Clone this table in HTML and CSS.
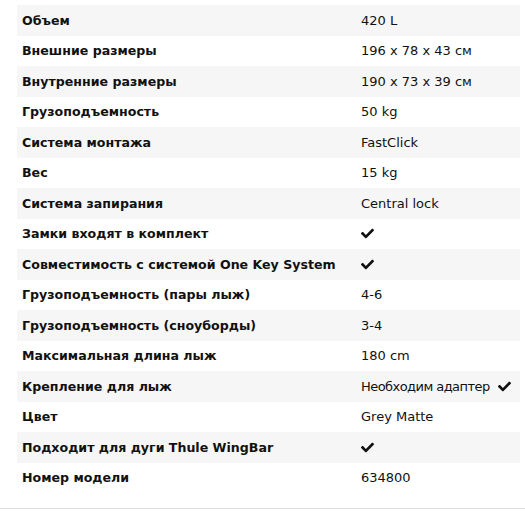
FILE: index.html
```html
<!DOCTYPE html>
<html lang="ru">
<head>
<meta charset="utf-8">
<link rel="stylesheet" href="styles.css">
</head>
<body>
<div class="specs">
  <div class="table">
    <div class="row"><div class="label">Объем</div><div class="value">420 L</div></div>
    <div class="row"><div class="label">Внешние размеры</div><div class="value">196 x 78 x 43 см</div></div>
    <div class="row"><div class="label">Внутренние размеры</div><div class="value">190 x 73 x 39 см</div></div>
    <div class="row"><div class="label">Грузоподъемность</div><div class="value">50 kg</div></div>
    <div class="row"><div class="label">Система монтажа</div><div class="value">FastClick</div></div>
    <div class="row"><div class="label">Вес</div><div class="value">15 kg</div></div>
    <div class="row"><div class="label">Система запирания</div><div class="value">Central lock</div></div>
    <div class="row"><div class="label">Замки входят в комплект</div><div class="value"><svg class="check" viewBox="0 0 512 512"><path d="M173.898 439.404l-166.4-166.4c-9.997-9.997-9.997-26.206 0-36.204l36.203-36.204c9.997-9.998 26.207-9.998 36.204 0L192 312.69 432.095 72.596c9.997-9.997 26.207-9.997 36.204 0l36.203 36.204c9.997 9.997 9.997 26.206 0 36.204l-294.4 294.401c-9.998 9.997-26.207 9.997-36.204-.001z"/></svg></div></div>
    <div class="row"><div class="label">Совместимость с системой One Key System</div><div class="value"><svg class="check" viewBox="0 0 512 512"><path d="M173.898 439.404l-166.4-166.4c-9.997-9.997-9.997-26.206 0-36.204l36.203-36.204c9.997-9.998 26.207-9.998 36.204 0L192 312.69 432.095 72.596c9.997-9.997 26.207-9.997 36.204 0l36.203 36.204c9.997 9.997 9.997 26.206 0 36.204l-294.4 294.401c-9.998 9.997-26.207 9.997-36.204-.001z"/></svg></div></div>
    <div class="row"><div class="label">Грузоподъемность (пары лыж)</div><div class="value">4-6</div></div>
    <div class="row"><div class="label">Грузоподъемность (сноуборды)</div><div class="value">3-4</div></div>
    <div class="row"><div class="label">Максимальная длина лыж</div><div class="value">180 cm</div></div>
    <div class="row"><div class="label">Крепление для лыж</div><div class="value"><span class="narrow">Необходим адаптер</span><svg class="check after" viewBox="0 0 512 512"><path d="M173.898 439.404l-166.4-166.4c-9.997-9.997-9.997-26.206 0-36.204l36.203-36.204c9.997-9.998 26.207-9.998 36.204 0L192 312.69 432.095 72.596c9.997-9.997 26.207-9.997 36.204 0l36.203 36.204c9.997 9.997 9.997 26.206 0 36.204l-294.4 294.401c-9.998 9.997-26.207 9.997-36.204-.001z"/></svg></div></div>
    <div class="row"><div class="label">Цвет</div><div class="value">Grey Matte</div></div>
    <div class="row"><div class="label">Подходит для дуги Thule WingBar</div><div class="value"><svg class="check" viewBox="0 0 512 512"><path d="M173.898 439.404l-166.4-166.4c-9.997-9.997-9.997-26.206 0-36.204l36.203-36.204c9.997-9.998 26.207-9.998 36.204 0L192 312.69 432.095 72.596c9.997-9.997 26.207-9.997 36.204 0l36.203 36.204c9.997 9.997 9.997 26.206 0 36.204l-294.4 294.401c-9.998 9.997-26.207 9.997-36.204-.001z"/></svg></div></div>
    <div class="row"><div class="label">Номер модели</div><div class="value">634800</div></div>
  </div>
</div>
</body>
</html>
```
FILE: styles.css
```css
html, body {
  margin: 0;
  padding: 0;
  background: #fff;
}
body {
  font-family: "DejaVu Sans", Verdana, sans-serif;
  font-size: 13px;
  color: #111;
}
.specs {
  padding: 5px 5px 15px 17px;
  border-bottom: 1px solid #dddddd;
}
.table {
  width: 503px;
  display: flex;
  flex-direction: column;
}
.row {
  display: grid;
  grid-template-columns: 339px 1fr;
  height: 30.5px;
  align-items: center;
}
.row:nth-child(odd) {
  background: #f6f6f6;
}
.label {
  font-weight: bold;
  font-size: 12.6px;
  padding-left: 5px;
  white-space: nowrap;
}
.value {
  padding-left: 5px;
  white-space: nowrap;
  display: flex;
  align-items: center;
}
.narrow {
  letter-spacing: -0.55px;
}
.check {
  width: 13px;
  height: 13px;
  fill: #111;
}
.check.after {
  margin-left: 8px;
}
```
